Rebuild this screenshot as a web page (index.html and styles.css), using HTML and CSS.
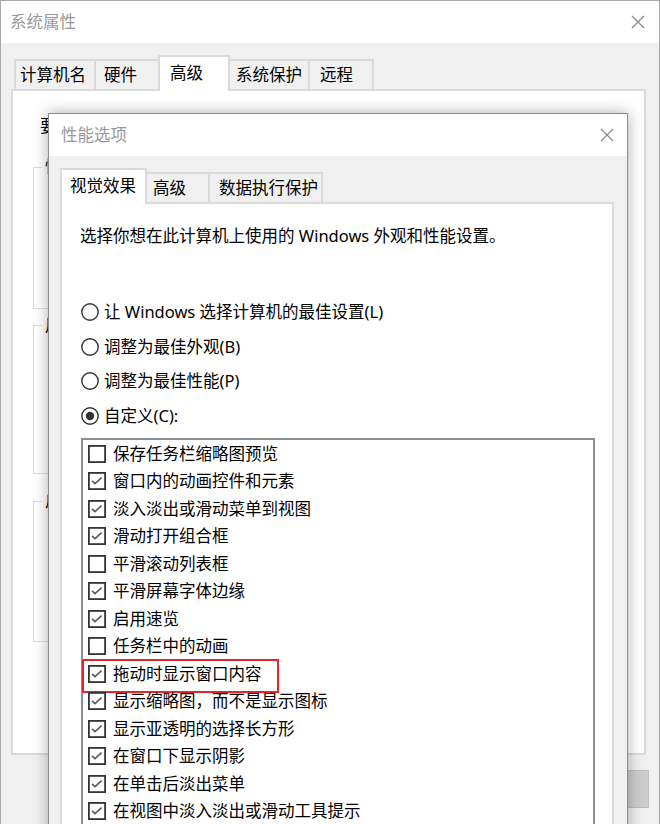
FILE: index.html
```html
<!DOCTYPE html>
<html lang="zh-CN">
<head>
<meta charset="utf-8">
<title>系统属性</title>
<link rel="stylesheet" href="styles.css">
</head>
<body>
<div class="window">
  <div class="titlebar outer-titlebar">
    <span class="title">系统属性</span>
    <svg class="close" width="14" height="14" viewBox="0 0 14 14"><path d="M1 1L13 13M13 1L1 13" stroke="#8a8a8a" stroke-width="1.2" fill="none"/></svg>
  </div>
  <div class="win-body outer-body">
    <div class="tabs outer-tabs">
      <div class="tab tab-computer">计算机名</div>
      <div class="tab tab-hardware">硬件</div>
      <div class="tab tab-advanced active">高级</div>
      <div class="tab tab-protect">系统保护</div>
      <div class="tab tab-remote">远程</div>
    </div>
    <div class="panel outer-panel">
      <p class="note">要进行大多数更改，你必须作为管理员登录。</p>
      <div class="group group-perf"><span class="legend">性能</span></div>
      <div class="group group-profile"><span class="legend">用户配置文件</span></div>
      <div class="group group-startup"><span class="legend">启动和故障恢复</span></div>
    </div>
    <div class="btn-row">
      <button class="btn">确定</button>
      <button class="btn">取消</button>
      <button class="btn disabled">应用(A)</button>
    </div>
  </div>

  <div class="dialog">
    <div class="titlebar dialog-titlebar">
      <span class="title">性能选项</span>
      <svg class="close" width="14" height="14" viewBox="0 0 14 14"><path d="M1 1L13 13M13 1L1 13" stroke="#8a8a8a" stroke-width="1.2" fill="none"/></svg>
    </div>
    <div class="win-body dialog-body">
      <div class="tabs dialog-tabs">
        <div class="tab tab-visual active">视觉效果</div>
        <div class="tab tab-adv2">高级</div>
        <div class="tab tab-dep">数据执行保护</div>
      </div>
      <div class="panel inner-panel">
        <p class="desc">选择你想在此计算机上使用的 Windows 外观和性能设置。</p>
        <div class="radios">
          <div class="radio"><svg class="rb" width="18" height="18" viewBox="0 0 18 18"><circle cx="9" cy="9" r="8.2" fill="#fff" stroke="#333" stroke-width="1.4"/></svg><span>让 Windows 选择计算机的最佳设置(L)</span></div>
          <div class="radio"><svg class="rb" width="18" height="18" viewBox="0 0 18 18"><circle cx="9" cy="9" r="8.2" fill="#fff" stroke="#333" stroke-width="1.4"/></svg><span>调整为最佳外观(B)</span></div>
          <div class="radio"><svg class="rb" width="18" height="18" viewBox="0 0 18 18"><circle cx="9" cy="9" r="8.2" fill="#fff" stroke="#333" stroke-width="1.4"/></svg><span>调整为最佳性能(P)</span></div>
          <div class="radio"><svg class="rb" width="18" height="18" viewBox="0 0 18 18"><circle cx="9" cy="9" r="8.2" fill="#fff" stroke="#333" stroke-width="1.4"/><circle cx="9" cy="9" r="4.2" fill="#333"/></svg><span>自定义(C):</span></div>
        </div>
        <div class="list">
          <div class="row"><svg class="cb" width="18" height="18" viewBox="0 0 18 18"><rect x="0.9" y="0.9" width="16.2" height="16.2" fill="#fff" stroke="#333" stroke-width="1.8"/></svg><span>保存任务栏缩略图预览</span></div>
          <div class="row"><svg class="cb" width="18" height="18" viewBox="0 0 18 18"><rect x="0.9" y="0.9" width="16.2" height="16.2" fill="#fff" stroke="#333" stroke-width="1.8"/><path d="M4 8.8L7 11.6L13.6 5.6" fill="none" stroke="#5a5a5a" stroke-width="1.6"/></svg><span>窗口内的动画控件和元素</span></div>
          <div class="row"><svg class="cb" width="18" height="18" viewBox="0 0 18 18"><rect x="0.9" y="0.9" width="16.2" height="16.2" fill="#fff" stroke="#333" stroke-width="1.8"/><path d="M4 8.8L7 11.6L13.6 5.6" fill="none" stroke="#5a5a5a" stroke-width="1.6"/></svg><span>淡入淡出或滑动菜单到视图</span></div>
          <div class="row"><svg class="cb" width="18" height="18" viewBox="0 0 18 18"><rect x="0.9" y="0.9" width="16.2" height="16.2" fill="#fff" stroke="#333" stroke-width="1.8"/><path d="M4 8.8L7 11.6L13.6 5.6" fill="none" stroke="#5a5a5a" stroke-width="1.6"/></svg><span>滑动打开组合框</span></div>
          <div class="row"><svg class="cb" width="18" height="18" viewBox="0 0 18 18"><rect x="0.9" y="0.9" width="16.2" height="16.2" fill="#fff" stroke="#333" stroke-width="1.8"/></svg><span>平滑滚动列表框</span></div>
          <div class="row"><svg class="cb" width="18" height="18" viewBox="0 0 18 18"><rect x="0.9" y="0.9" width="16.2" height="16.2" fill="#fff" stroke="#333" stroke-width="1.8"/><path d="M4 8.8L7 11.6L13.6 5.6" fill="none" stroke="#5a5a5a" stroke-width="1.6"/></svg><span>平滑屏幕字体边缘</span></div>
          <div class="row"><svg class="cb" width="18" height="18" viewBox="0 0 18 18"><rect x="0.9" y="0.9" width="16.2" height="16.2" fill="#fff" stroke="#333" stroke-width="1.8"/><path d="M4 8.8L7 11.6L13.6 5.6" fill="none" stroke="#5a5a5a" stroke-width="1.6"/></svg><span>启用速览</span></div>
          <div class="row"><svg class="cb" width="18" height="18" viewBox="0 0 18 18"><rect x="0.9" y="0.9" width="16.2" height="16.2" fill="#fff" stroke="#333" stroke-width="1.8"/></svg><span>任务栏中的动画</span></div>
          <div class="row hl"><svg class="cb" width="18" height="18" viewBox="0 0 18 18"><rect x="0.9" y="0.9" width="16.2" height="16.2" fill="#fff" stroke="#333" stroke-width="1.8"/><path d="M4 8.8L7 11.6L13.6 5.6" fill="none" stroke="#5a5a5a" stroke-width="1.6"/></svg><span>拖动时显示窗口内容</span></div>
          <div class="row"><svg class="cb" width="18" height="18" viewBox="0 0 18 18"><rect x="0.9" y="0.9" width="16.2" height="16.2" fill="#fff" stroke="#333" stroke-width="1.8"/><path d="M4 8.8L7 11.6L13.6 5.6" fill="none" stroke="#5a5a5a" stroke-width="1.6"/></svg><span>显示缩略图，而不是显示图标</span></div>
          <div class="row"><svg class="cb" width="18" height="18" viewBox="0 0 18 18"><rect x="0.9" y="0.9" width="16.2" height="16.2" fill="#fff" stroke="#333" stroke-width="1.8"/><path d="M4 8.8L7 11.6L13.6 5.6" fill="none" stroke="#5a5a5a" stroke-width="1.6"/></svg><span>显示亚透明的选择长方形</span></div>
          <div class="row"><svg class="cb" width="18" height="18" viewBox="0 0 18 18"><rect x="0.9" y="0.9" width="16.2" height="16.2" fill="#fff" stroke="#333" stroke-width="1.8"/><path d="M4 8.8L7 11.6L13.6 5.6" fill="none" stroke="#5a5a5a" stroke-width="1.6"/></svg><span>在窗口下显示阴影</span></div>
          <div class="row"><svg class="cb" width="18" height="18" viewBox="0 0 18 18"><rect x="0.9" y="0.9" width="16.2" height="16.2" fill="#fff" stroke="#333" stroke-width="1.8"/><path d="M4 8.8L7 11.6L13.6 5.6" fill="none" stroke="#5a5a5a" stroke-width="1.6"/></svg><span>在单击后淡出菜单</span></div>
          <div class="row"><svg class="cb" width="18" height="18" viewBox="0 0 18 18"><rect x="0.9" y="0.9" width="16.2" height="16.2" fill="#fff" stroke="#333" stroke-width="1.8"/><path d="M4 8.8L7 11.6L13.6 5.6" fill="none" stroke="#5a5a5a" stroke-width="1.6"/></svg><span>在视图中淡入淡出或滑动工具提示</span></div>
        </div>
      </div>
    </div>
  </div>
</div>
</body>
</html>
```

FILE: styles.css
```css
* { box-sizing: border-box; }
html, body { margin: 0; padding: 0; }
body {
  width: 660px;
  height: 824px;
  overflow: hidden;
  background: #f0f0f0;
  font-family: "Noto Sans", "Noto Sans CJK SC", sans-serif;
  font-size: 16.5px;
  line-height: 22px;
  color: #000;
}
.window {
  position: relative;
  width: 660px;
  height: 824px;
  border: 1px solid #a8a8a8;
  border-bottom: none;
  background: #f0f0f0;
  overflow: hidden;
}
.titlebar {
  height: 42px;
  background: #fff;
  display: flex;
  align-items: center;
  justify-content: space-between;
}
.outer-titlebar { padding: 0 14px 0 9px; }
.dialog-titlebar { padding: 0 13px 0 12px; }
.title { color: #999; white-space: nowrap; }
.close { display: block; }

.win-body { padding-top: 12px; }

.tabs {
  display: flex;
  align-items: flex-end;
  height: 36px;
  position: relative;
  z-index: 1;
  margin-bottom: -2px;
}
.outer-tabs { padding-left: 13px; }
.dialog-tabs { padding-left: 11px; }
.tab {
  height: 32px;
  border: 2px solid #dadada;
  background: #f0f0f0;
  display: flex;
  align-items: center;
  padding-bottom: 1px;
  white-space: nowrap;
  margin-left: -2px;
}
.tab:first-child { margin-left: 0; }
.tab.active {
  height: 36px;
  background: #fff;
  border-bottom: none;
  position: relative;
  z-index: 2;
  padding-bottom: 3px;
}
.tab-computer { width: 82px; padding-left: 4px; }
.tab-hardware { width: 66px; padding-left: 8px; }
.tab-advanced { width: 72px; padding-left: 10px; }
.tab-protect { width: 82px; padding-left: 6px; }
.tab-remote { width: 66px; padding-left: 10px; }
.tab-visual { width: 87px; padding-left: 8px; }
.tab-adv2 { width: 65px; padding-left: 6px; }
.tab-dep { width: 115px; padding-left: 9px; }

.panel {
  background: #fff;
  border: 2px solid #dadada;
}
.outer-panel {
  margin: 0 13px 0 10px;
  height: 666px;
  padding: 24px 20px 0 20px;
}
.note { margin: 0 0 0 7px; white-space: nowrap; }
.group {
  border: 1px solid #dcdcdc;
  padding-left: 8px;
}
.legend {
  display: inline-block;
  margin-top: -12px;
  padding: 0 3px;
  background: #fff;
  vertical-align: top;
}
.group-perf { margin-top: 30px; height: 142px; }
.group-profile { margin-top: 16px; height: 149px; }
.group-startup { margin-top: 27px; height: 141px; }

.btn-row {
  display: flex;
  justify-content: flex-end;
  gap: 10px;
  margin-top: 15px;
  padding-right: 10px;
}
.btn {
  width: 112px;
  height: 38px;
  font: inherit;
  background: #e1e1e1;
  border: 1px solid #adadad;
  color: #000;
  padding: 0;
}
.btn.disabled {
  background: #cccccc;
  border-color: #bfbfbf;
  color: #838383;
}

.dialog {
  position: absolute;
  left: 47px;
  top: 112px;
  width: 580px;
  height: 740px;
  border: 1px solid #8c8c8c;
  background: #f0f0f0;
  box-shadow: 0 0 14px rgba(0, 0, 0, 0.32);
  z-index: 5;
}
.inner-panel {
  margin: 0 13px 0 11px;
  height: 660px;
  padding-top: 21px;
}
.desc { margin: 0 0 0 18px; white-space: nowrap; }
.radios { margin: 47.67px 0 0 19px; }
.radio {
  height: 34.67px;
  display: flex;
  align-items: center;
  gap: 5px;
  white-space: nowrap;
}
.rb, .cb { display: block; flex: none; }
.list {
  margin: 4.67px 0 0 19px;
  width: 514px;
  height: 420px;
  border: 2px solid #8b8f96;
  border-bottom: none;
  background: #fff;
}
.row {
  position: relative;
  height: 27.5px;
  display: flex;
  align-items: center;
  gap: 7px;
  padding-left: 5px;
  white-space: nowrap;
}
.row.hl::after {
  content: "";
  position: absolute;
  left: -1px;
  top: -1px;
  width: 193px;
  height: 30px;
  border: 2px solid #e3262a;
}
```
